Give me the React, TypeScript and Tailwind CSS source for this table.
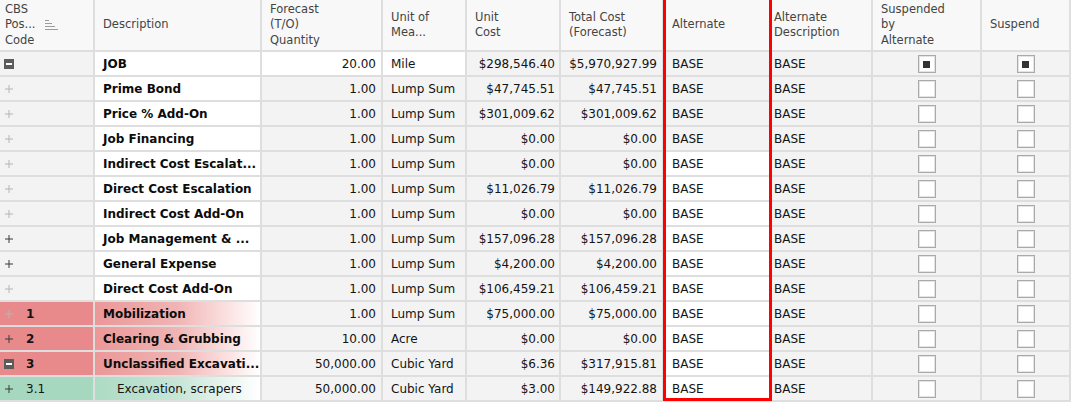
import React from 'react'

type Tone = 'red' | 'green' | undefined
type Icon = 'minus' | 'plus' | 'plusDark'

interface Row {
  code: string
  icon: Icon
  desc: string
  bold?: boolean
  indent?: boolean
  qty: string
  unit: string
  unitCost: string
  total: string
  tone?: Tone
  checked?: boolean
}

const rows: Row[] = [
  { code: '', icon: 'minus', desc: 'JOB', bold: true, qty: '20.00', unit: 'Mile', unitCost: '$298,546.40', total: '$5,970,927.99', checked: true },
  { code: '', icon: 'plus', desc: 'Prime Bond', bold: true, qty: '1.00', unit: 'Lump Sum', unitCost: '$47,745.51', total: '$47,745.51' },
  { code: '', icon: 'plus', desc: 'Price % Add-On', bold: true, qty: '1.00', unit: 'Lump Sum', unitCost: '$301,009.62', total: '$301,009.62' },
  { code: '', icon: 'plus', desc: 'Job Financing', bold: true, qty: '1.00', unit: 'Lump Sum', unitCost: '$0.00', total: '$0.00' },
  { code: '', icon: 'plus', desc: 'Indirect Cost Escalat...', bold: true, qty: '1.00', unit: 'Lump Sum', unitCost: '$0.00', total: '$0.00' },
  { code: '', icon: 'plus', desc: 'Direct Cost Escalation', bold: true, qty: '1.00', unit: 'Lump Sum', unitCost: '$11,026.79', total: '$11,026.79' },
  { code: '', icon: 'plus', desc: 'Indirect Cost Add-On', bold: true, qty: '1.00', unit: 'Lump Sum', unitCost: '$0.00', total: '$0.00' },
  { code: '', icon: 'plusDark', desc: 'Job Management & ...', bold: true, qty: '1.00', unit: 'Lump Sum', unitCost: '$157,096.28', total: '$157,096.28' },
  { code: '', icon: 'plusDark', desc: 'General Expense', bold: true, qty: '1.00', unit: 'Lump Sum', unitCost: '$4,200.00', total: '$4,200.00' },
  { code: '', icon: 'plus', desc: 'Direct Cost Add-On', bold: true, qty: '1.00', unit: 'Lump Sum', unitCost: '$106,459.21', total: '$106,459.21' },
  { code: '1', icon: 'plus', desc: 'Mobilization', bold: true, qty: '1.00', unit: 'Lump Sum', unitCost: '$75,000.00', total: '$75,000.00', tone: 'red' },
  { code: '2', icon: 'plusDark', desc: 'Clearing & Grubbing', bold: true, qty: '10.00', unit: 'Acre', unitCost: '$0.00', total: '$0.00', tone: 'red' },
  { code: '3', icon: 'minus', desc: 'Unclassified Excavati...', bold: true, qty: '50,000.00', unit: 'Cubic Yard', unitCost: '$6.36', total: '$317,915.81', tone: 'red' },
  { code: '3.1', icon: 'plusDark', desc: 'Excavation, scrapers', indent: true, qty: '50,000.00', unit: 'Cubic Yard', unitCost: '$3.00', total: '$149,922.88', tone: 'green' },
]

const cell = 'h-[25px] pt-px border-r-2 border-b-2 border-[#dedede] flex items-center overflow-hidden whitespace-nowrap'
const head = 'h-[52px] border-r-2 border-b-2 border-[#dedede] bg-[#f8f8f8] flex items-center pl-2 text-[#444] leading-[15.5px] text-[11.5px]'

function TreeIcon({ kind }: { kind: Icon }) {
  if (kind === 'minus') {
    return (
      <span className="w-[10px] h-[10px] bg-[#5c5c5c] flex items-center justify-center">
        <span className="w-[6px] h-[2px] bg-white" />
      </span>
    )
  }
  const color = kind === 'plus' ? '#b5b5b5' : '#3a3a3a'
  return (
    <svg width="10" height="10" viewBox="0 0 10 10">
      <path d="M5 1v8M1 5h8" stroke={color} strokeWidth="1" />
    </svg>
  )
}

function SortIcon() {
  return (
    <svg width="14" height="12" viewBox="0 0 14 12" className="ml-[8px] inline-block align-middle">
      <path d="M1 1.5h4M1 4.5h7M1 7.5h10M1 10.5h13" stroke="#9c9c9c" strokeWidth="1" />
    </svg>
  )
}

function Check({ on }: { on?: boolean }) {
  return (
    <span className="w-[18px] h-[18px] border border-[#a9a9a9] bg-white shadow-[inset_0_0_0_1px_#e4e4e4] flex items-center justify-center">
      {on && <span className="w-[7px] h-[7px] bg-[#333]" />}
    </span>
  )
}

export default function App() {
  return (
    <div className="w-[1071px] h-[402px] overflow-hidden bg-white font-['DejaVu_Sans',sans-serif] text-[12px] text-[#141414]">
      <div className="relative">
        <div className="grid grid-cols-[95px_167px_121px_84px_94px_103px_107px_102px_109px_89px]">
          <div className={head + ' pl-[5px]'}>
            <div>
              CBS
              <br />
              Pos...
              <SortIcon />
              <br />
              Code
            </div>
          </div>
          <div className={head}>Description</div>
          <div className={head}>
            <div>
              Forecast
              <br />
              (T/O)
              <br />
              Quantity
            </div>
          </div>
          <div className={head}>
            <div>
              Unit of
              <br />
              Mea...
            </div>
          </div>
          <div className={head}>
            <div>
              Unit
              <br />
              Cost
            </div>
          </div>
          <div className={head}>
            <div>
              Total Cost
              <br />
              (Forecast)
            </div>
          </div>
          <div className={head}>Alternate</div>
          <div className={head + ' pl-[3px]'}>
            <div>
              Alternate
              <br />
              Description
            </div>
          </div>
          <div className={head}>
            <div>
              Suspended
              <br />
              by
              <br />
              Alternate
            </div>
          </div>
          <div className={head}>Suspend</div>

          {rows.map((r, i) => {
            const first = i === 0
            const gray = 'bg-[#f3f3f3]'
            const cbsBg = r.tone === 'red' ? 'bg-[#e88a8b]' : r.tone === 'green' ? 'bg-[#a6d8bf]' : gray
            const descBg =
              r.tone === 'red'
                ? 'bg-gradient-to-r from-[#eb9798] via-[#f0b4b4] to-white'
                : r.tone === 'green'
                  ? 'bg-gradient-to-r from-[#addbc4] via-[#c6e6d6] to-white'
                  : 'bg-white'
            return (
              <React.Fragment key={i}>
                <div className={`${cell} ${cbsBg} pl-[4px] gap-[12px]`}>
                  <TreeIcon kind={r.icon} />
                  <span className={r.bold ? 'font-bold' : ''}>{r.code}</span>
                </div>
                <div className={`${cell} ${descBg} ${r.indent ? 'pl-[22px]' : 'pl-2'}`}>
                  <span className={r.bold ? 'font-bold text-[#0c0c0c]' : ''}>{r.desc}</span>
                </div>
                <div className={`${cell} ${first ? 'bg-white' : gray} justify-end pr-[5px]`}>{r.qty}</div>
                <div className={`${cell} ${first ? 'bg-white' : gray} pl-2`}>{r.unit}</div>
                <div className={`${cell} ${gray} justify-end pr-[4px]`}>{r.unitCost}</div>
                <div className={`${cell} ${gray} justify-end pr-[5px]`}>{r.total}</div>
                <div className={`${cell} ${i < 4 ? gray : 'bg-white'} pl-[8px]`}>BASE</div>
                <div className={`${cell} ${gray} pl-[3px]`}>BASE</div>
                <div className={`${cell} ${gray} justify-center`}>
                  <Check on={r.checked} />
                </div>
                <div className={`${cell} ${gray} justify-center`}>
                  <Check on={r.checked} />
                </div>
              </React.Fragment>
            )
          })}
        </div>
        <div className="absolute left-[663px] top-[-3px] w-[109px] h-[404px] border-[3px] border-[#ff0000] pointer-events-none" />
      </div>
    </div>
  )
}
